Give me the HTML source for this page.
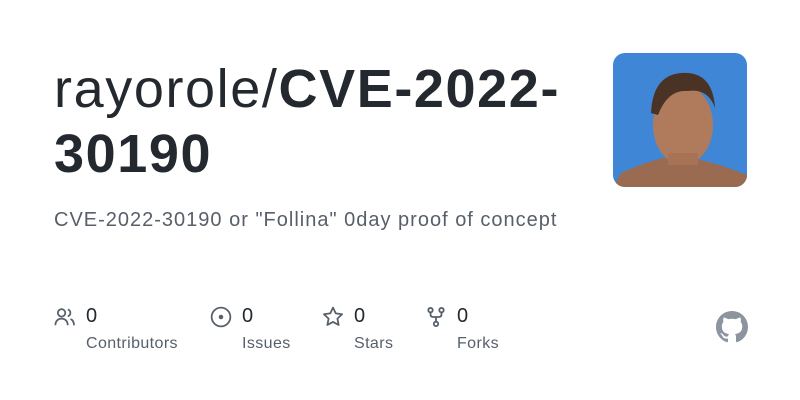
<!DOCTYPE html>
<html><head><style>
body{margin:0;width:800px;height:400px;background:#fff;font-family:"Liberation Sans",sans-serif;position:relative;overflow:hidden}
.t{position:absolute;left:54px;top:57px;font-size:54px;line-height:65px;color:#24292f;letter-spacing:1.6px;width:560px}
.t b{font-weight:700}
.d{position:absolute;left:54px;top:209px;font-size:20px;color:#57606a;letter-spacing:1px}
.s{position:absolute;top:305px;font-size:20px;color:#24292f}
.s svg{position:absolute;left:0;top:1px}
.s .n{position:absolute;left:32px;top:0}
.s .l{position:absolute;left:32px;top:30px;font-size:16px;color:#57606a;white-space:nowrap;letter-spacing:0.4px}
</style></head><body>
<div class="t">rayorole/<b>CVE-2022-<br>30190</b></div>
<div class="d">CVE-2022-30190 or "Follina" 0day proof of concept</div>
<svg style="position:absolute;left:613px;top:53px" width="134" height="134" viewBox="0 0 134 134">
<defs><clipPath id="c"><rect width="134" height="134" rx="12"/></clipPath></defs>
<g clip-path="url(#c)">
<rect width="134" height="134" fill="#3f86d6"/>
<path d="M0 134 L8 120 Q30 110 50 105 L80 105 Q110 112 134 122 L134 134Z" fill="#9a6b50"/>
<ellipse cx="70" cy="72" rx="30" ry="40" fill="#b07a5c"/>
<path d="M38 60 Q40 18 75 20 Q100 22 102 55 Q95 35 75 38 Q55 36 45 62Z" fill="#4a3225"/>
<rect x="55" y="100" width="30" height="12" fill="#a87256"/>
</g></svg>
<div class="s" style="left:54px"><svg width="22" height="22" viewBox="0 0 16 16" fill="none" stroke="#57606a" stroke-width="1.3"><circle cx="5.5" cy="5" r="2.7"/><path d="M1 14c0-3 2-4.8 4.5-4.8S10 11 10 14M10 2.5a2.6 2.6 0 010 5M12 9.5c1.6.6 2.5 2.2 2.5 4.5"/></svg><span class="n">0</span><span class="l">Contributors</span></div>
<div class="s" style="left:210px"><svg width="22" height="22" viewBox="0 0 16 16" fill="none" stroke="#57606a" stroke-width="1.3"><circle cx="8" cy="8" r="6.8"/><circle cx="8" cy="8" r="1" fill="#57606a"/></svg><span class="n">0</span><span class="l">Issues</span></div>
<div class="s" style="left:322px"><svg width="22" height="22" viewBox="0 0 16 16" fill="none" stroke="#57606a" stroke-width="1.3" stroke-linejoin="round"><path d="M8 1.2l2 4.2 4.6.6-3.4 3.2.9 4.6L8 11.6 3.9 13.8l.9-4.6L1.4 6l4.6-.6z"/></svg><span class="n">0</span><span class="l">Stars</span></div>
<div class="s" style="left:425px"><svg width="22" height="22" viewBox="0 0 16 16" fill="none" stroke="#57606a" stroke-width="1.3"><circle cx="4" cy="3" r="1.6"/><circle cx="12" cy="3" r="1.6"/><circle cx="8" cy="13" r="1.6"/><path d="M4 4.6v1.4q0 2 2 2h4q2 0 2-2V4.6M8 8v3.4"/></svg><span class="n">0</span><span class="l">Forks</span></div>
<svg style="position:absolute;left:716px;top:311px" width="32" height="32" viewBox="0 0 16 16"><path fill="#8c959f" d="M8 0C3.58 0 0 3.58 0 8c0 3.540 2.29 6.53 5.47 7.59.4.07.55-.17.55-.38 0-.19-.01-.82-.01-1.490-2.01.37-2.530-.49-2.690-.94-.09-.23-.48-.94-.82-1.13-.28-.15-.68-.52-.01-.53.63-.01 1.08.58 1.23.82.72 1.21 1.87.87 2.33.66.07-.52.28-.87.51-1.07-1.78-.2-3.64-.89-3.64-3.95 0-.87.31-1.59.82-2.15-.08-.2-.36-1.02.08-2.12 0 0 .67-.21 2.2.82.64-.18 1.32-.27 2-.27.68 0 1.36.09 2 .27 1.53-1.04 2.2-.82 2.2-.82.44 1.1.16 1.92.08 2.12.51.56.82 1.27.82 2.15 0 3.07-1.87 3.75-3.65 3.95.29.25.54.73.54 1.48 0 1.07-.01 1.93-.01 2.2 0 .21.15.46.55.38A8.013 8.013 0 0016 8c0-4.42-3.58-8-8-8z"/></svg>
</body></html>
